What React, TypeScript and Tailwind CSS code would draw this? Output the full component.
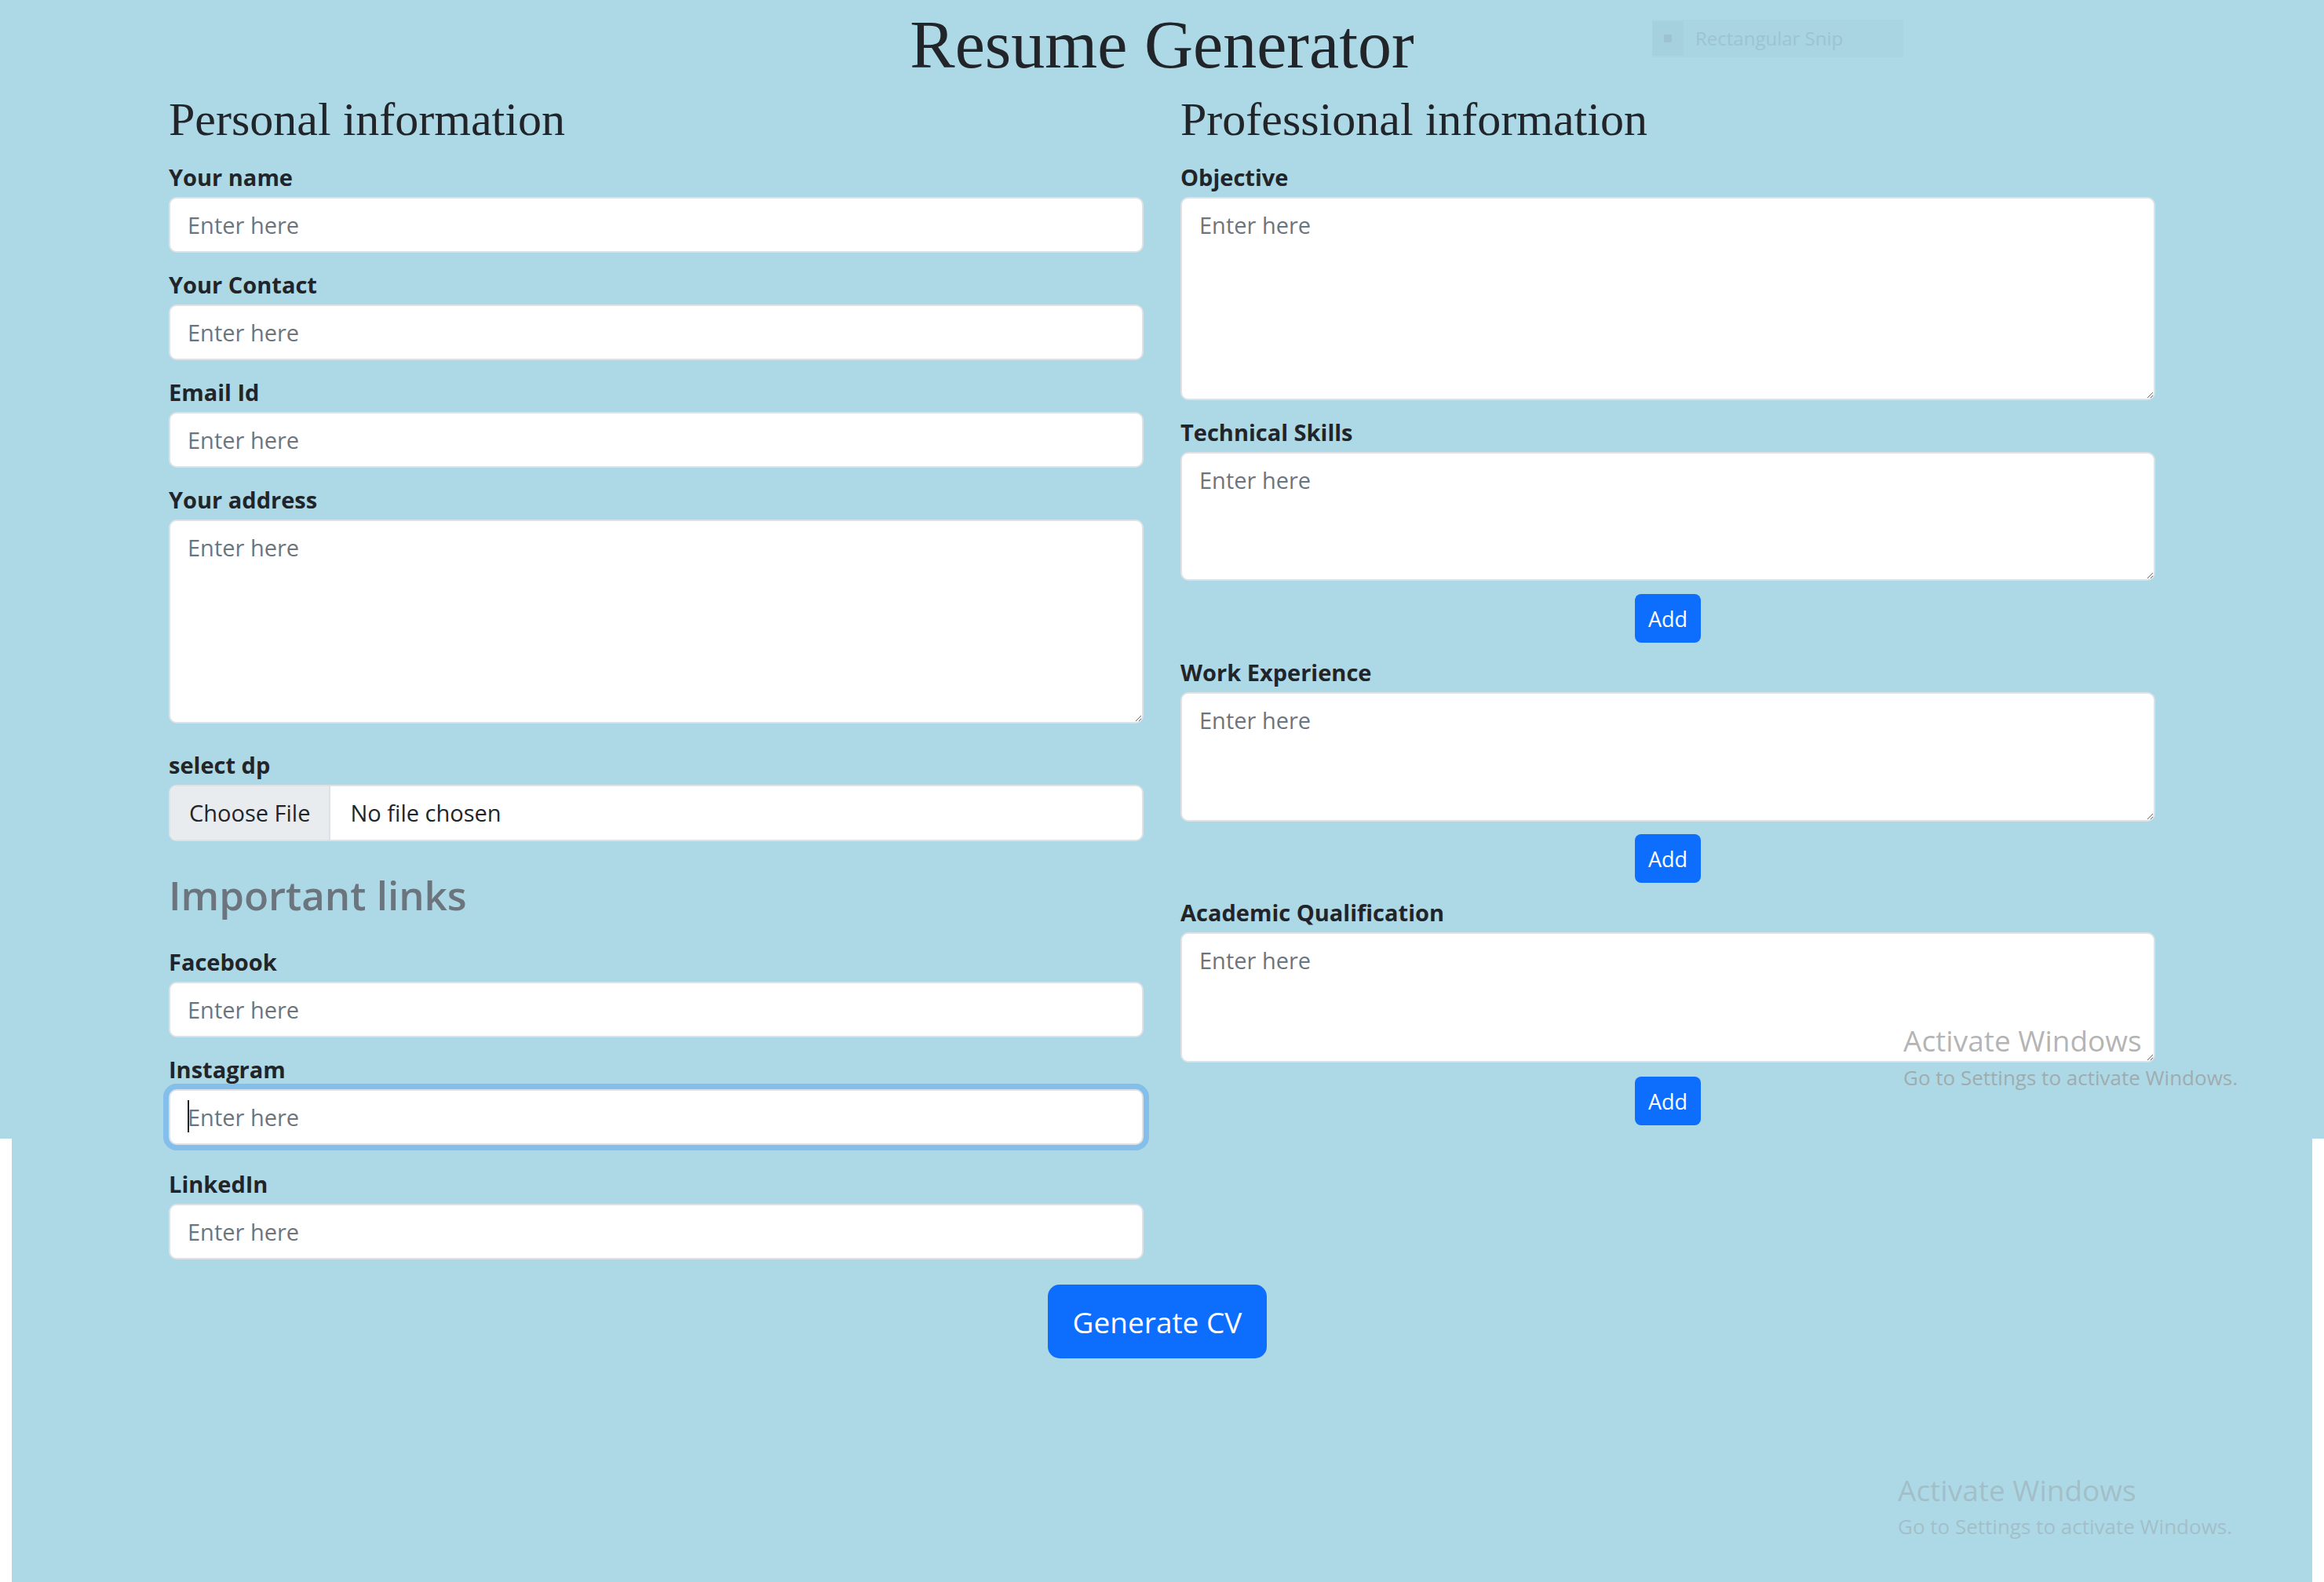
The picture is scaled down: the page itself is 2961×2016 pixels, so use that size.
import React from "react";

const labelCls = "block text-[29px] font-bold leading-[45px] text-[#212529]";
const boxCls =
  "block w-full rounded-[10px] border-2 border-[#dee2e6] bg-white px-[22px] text-[29px] leading-[45px] text-[#212529] outline-none placeholder:text-[#6c757d]";

function TextField({ label, className = "" }: { label: string; className?: string }) {
  return (
    <div className={className}>
      <label className={labelCls}>{label}</label>
      <input type="text" placeholder="Enter here" className={`${boxCls} mt-[3px] h-[71px]`} />
    </div>
  );
}

function AreaField({ label, h, className = "" }: { label: string; h: string; className?: string }) {
  return (
    <div className={className}>
      <label className={labelCls}>{label}</label>
      <textarea placeholder="Enter here" className={`${boxCls} mt-[3px] pt-[11px] ${h}`} />
    </div>
  );
}

function AddButton({ className = "" }: { className?: string }) {
  return (
    <div className={`flex justify-center ${className}`}>
      <button className="h-[62px] rounded-[8px] bg-[#0d6efd] px-[17px] text-[27px] leading-none text-white">
        Add
      </button>
    </div>
  );
}

export default function App() {
  return (
    <div className="relative min-h-[2016px] overflow-hidden bg-[#add8e6] font-['Open_Sans',sans-serif]">
      {/* snipping tool hint, barely visible */}
      <div className="absolute left-[2105px] top-[25px] flex h-[48px] w-[320px] items-center gap-[15px] bg-[#a9d4e1]">
        <div className="flex h-[44px] w-[40px] items-center justify-center bg-[#a5d0dd]">
          <div className="h-[10px] w-[10px] rounded-[2px] bg-[#9cc3cf]" />
        </div>
        <span className="text-[24px] text-[#9cc4d0]">Rectangular Snip</span>
      </div>

      <h1 className="pt-[14px] text-center font-['Liberation_Serif',serif] text-[86px] font-normal leading-none text-[#212529]">
        Resume Generator
      </h1>

      <div className="mx-auto mt-[22px] grid w-[2531px] grid-cols-2 items-start gap-x-[47px]">
        <section>
          <h2 className="font-['Liberation_Serif',serif] text-[60px] leading-none text-[#212529]">
            Personal information
          </h2>
          <TextField label="Your name" className="mt-[21px]" />
          <TextField label="Your Contact" className="mt-[18px]" />
          <TextField label="Email Id" className="mt-[18px]" />
          <AreaField label="Your address" h="h-[260px]" className="mt-[18px]" />

          <div className="mt-[30px]">
            <label className={labelCls}>select dp</label>
            <label className="mt-[3px] flex h-[72px] cursor-pointer overflow-hidden rounded-[10px] border-2 border-[#dee2e6] bg-white text-[29px] text-[#212529]">
              <span className="flex items-center border-r-2 border-[#dee2e6] bg-[#e9ecef] px-[24px]">Choose File</span>
              <span className="flex items-center pl-[25px]">No file chosen</span>
              <input type="file" className="hidden" />
            </label>
          </div>

          <h3 className="mt-[37px] text-[51px] font-semibold leading-[62px] text-[#6c757d]">Important links</h3>
          <TextField label="Facebook" className="mt-[32px]" />

          <div className="mt-[18px]">
            <label className={labelCls}>Instagram</label>
            <div className="relative mt-[3px]">
              <input
                type="text"
                placeholder="Enter here"
                className={`${boxCls} h-[71px] border-[#86b7fe] ring-[7px] ring-[#0d6efd]/25`}
              />
              <span className="absolute left-[24px] top-[14px] h-[41px] w-[2px] bg-[#212529]" />
            </div>
          </div>

          <TextField label="LinkedIn" className="mt-[27px]" />
        </section>

        <section>
          <h2 className="font-['Liberation_Serif',serif] text-[60px] leading-none text-[#212529]">
            Professional information
          </h2>
          <AreaField label="Objective" h="h-[259px]" className="mt-[21px]" />
          <AreaField label="Technical Skills" h="h-[164px]" className="mt-[18px]" />
          <AddButton className="mt-[17px]" />
          <AreaField label="Work Experience" h="h-[165px]" className="mt-[15px]" />
          <AddButton className="mt-[16px]" />
          <AreaField label="Academic Qualification" h="h-[166px]" className="mt-[15px]" />
          <AddButton className="mt-[18px]" />
        </section>
      </div>

      <div className="mt-[32px] flex justify-center pr-[12px]">
        <button className="h-[94px] rounded-[15px] bg-[#0d6efd] px-[32px] text-[37px] leading-none text-white">
          Generate CV
        </button>
      </div>

      {/* stitched-screenshot side strips */}
      <div className="absolute bottom-0 left-0 top-[1451px] w-[15px] bg-white" />
      <div className="absolute bottom-0 right-0 top-[1451px] w-[15px] bg-white" />

      {/* windows activation watermarks */}
      <div className="pointer-events-none absolute left-[2425px] top-[1307px] text-[rgba(156,156,156,0.75)]">
        <div className="text-[37px] leading-none">Activate Windows</div>
        <div className="mt-[16px] text-[26px] leading-none">Go to Settings to activate Windows.</div>
      </div>
      <div className="pointer-events-none absolute left-[2418px] top-[1880px] text-[rgba(150,160,165,0.45)]">
        <div className="text-[37px] leading-none">Activate Windows</div>
        <div className="mt-[15px] text-[26px] leading-none">Go to Settings to activate Windows.</div>
      </div>
    </div>
  );
}
